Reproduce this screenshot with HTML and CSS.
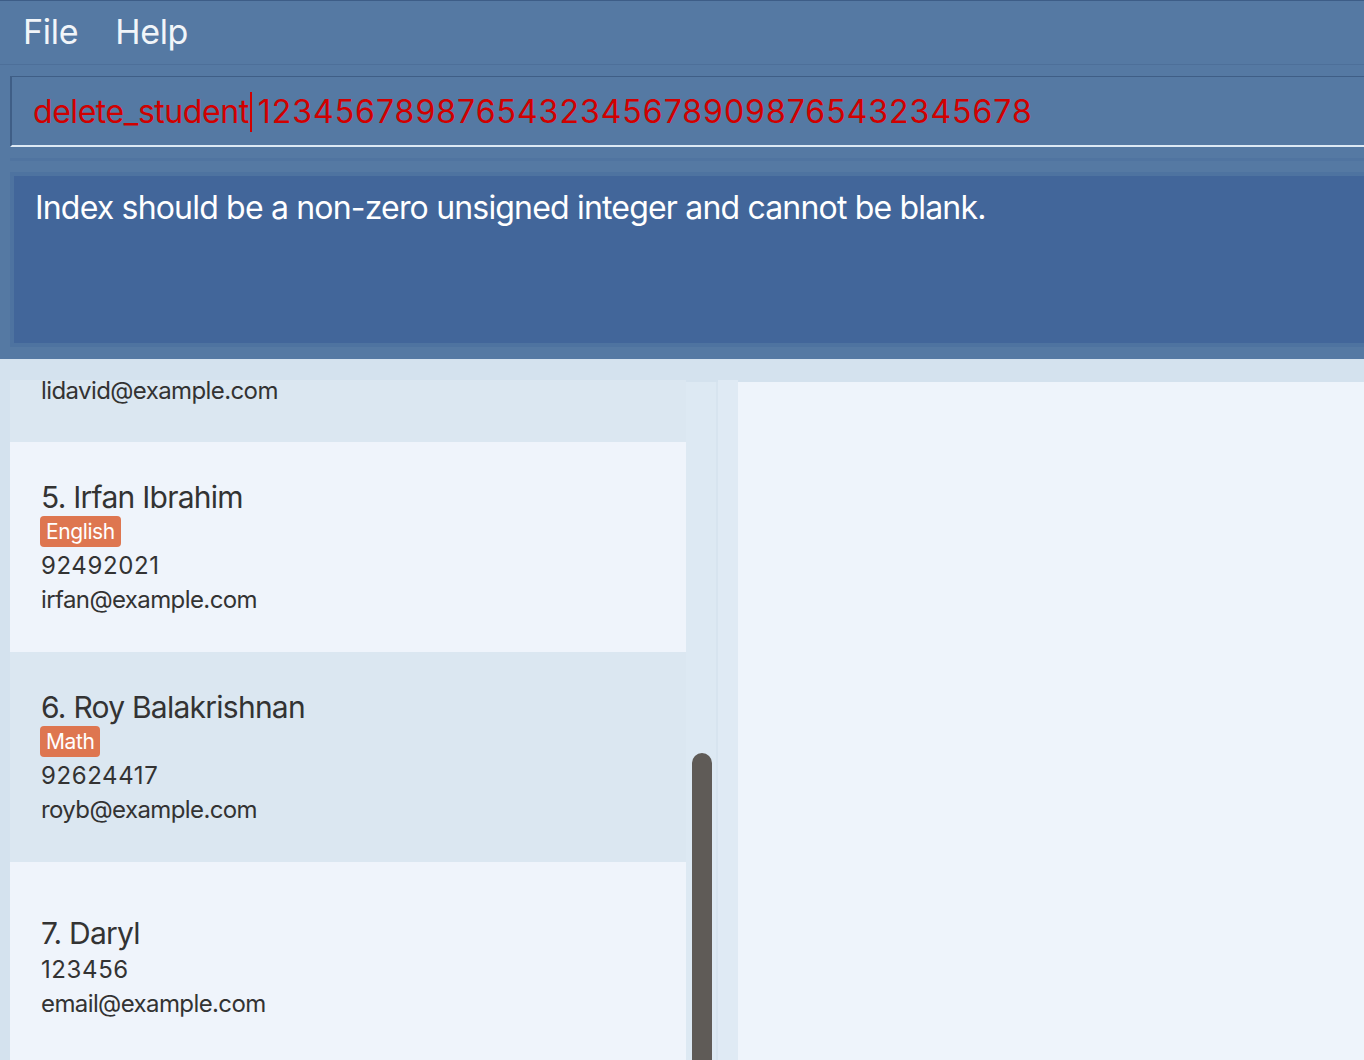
FILE: index.html
```html
<!DOCTYPE html>
<html>
<head>
<meta charset="utf-8">
<link rel="stylesheet" href="styles.css">
</head>
<body>
<div class="app">
  <div class="menubar">
    <span class="menu-item">File</span>
    <span class="menu-item">Help</span>
  </div>
  <div class="top-area">
    <div class="cmdbox"><span class="cmd">delete_student</span><span class="caret"></span><span class="cmd digits">12345678987654323456789098765432345678</span></div>
    <div class="band"></div>
    <div class="result"><div class="result-inner">Index should be a non-zero unsigned integer and cannot be blank.</div></div>
  </div>
  <div class="main">
    <div class="list">
      <div class="card alt clipped">
        <div class="line email">lidavid@example.com</div>
      </div>
      <div class="card">
        <div class="name">5. Irfan Ibrahim</div>
        <div class="tags"><span class="tag">English</span></div>
        <div class="line phone">92492021</div>
        <div class="line email">irfan@example.com</div>
      </div>
      <div class="card alt">
        <div class="name">6. Roy Balakrishnan</div>
        <div class="tags"><span class="tag">Math</span></div>
        <div class="line phone">92624417</div>
        <div class="line email">royb@example.com</div>
      </div>
      <div class="card">
        <div class="name">7. Daryl</div>
        <div class="line phone">123456</div>
        <div class="line email">email@example.com</div>
      </div>
    </div>
    <div class="track"><div class="thumb"></div></div>
    <div class="divider"></div>
    <div class="strip"></div>
    <div class="detail"></div>
  </div>
</div>
</body>
</html>
```
FILE: styles.css
```css
html, body {
  margin: 0;
  padding: 0;
}
body {
  width: 1364px;
  height: 1060px;
  overflow: hidden;
  background: #d4e2ee;
  font-family: Inter, "Noto Sans", sans-serif;
}
.app {
  display: flex;
  flex-direction: column;
  height: 1060px;
}
.menubar {
  height: 63px;
  border-top: 1px solid #3d5d87;
  border-bottom: 1px solid #4d6f99;
  background: #5579a3;
  display: flex;
  align-items: center;
  padding-left: 23px;
  gap: 37px;
  box-sizing: content-box;
}
.menu-item {
  color: #f1f5f9;
  font-size: 34px;
  line-height: 40px;
  margin-top: -2px;
  letter-spacing: -0.3px;
}
.top-area {
  background: #5579a3;
  padding: 11px 0 12px 10px;
  display: flex;
  flex-direction: column;
}
.cmdbox {
  height: 68px;
  border-top: 1px solid #3f5e86;
  border-left: 2px solid #3f5e86;
  border-bottom: 2px solid #dde9f4;
  display: flex;
  align-items: center;
  padding-left: 21px;
  color: #d10000;
  font-size: 32px;
}
.cmd {
  line-height: 40px;
  white-space: nowrap;
  letter-spacing: -0.45px;
  margin-top: 2px;
}
.cmd.digits {
  letter-spacing: 1px;
}
.caret {
  width: 2px;
  height: 40px;
  background: #d10000;
  margin: 2px 6px 0 1px;
}
.band {
  height: 3px;
  margin-top: 11px;
  margin-bottom: 11px;
  background: #5074a0;
}
.result {
  border: 4px solid #4e73a0;
  border-right: none;
  height: 175px;
  box-sizing: border-box;
  width: calc(100% + 4px);
}
.result-inner {
  background: #42669a;
  height: 100%;
  box-sizing: border-box;
  padding: 12px 0 0 21px;
  color: #ffffff;
  font-size: 32px;
  line-height: 40px;
  letter-spacing: -0.82px;
  white-space: nowrap;
}
.main {
  flex: 1;
  display: flex;
  padding-top: 21px;
  min-height: 0;
}
.list {
  margin-left: 10px;
  width: 676px;
  display: flex;
  flex-direction: column;
  overflow: hidden;
}
.card {
  flex: none;
  height: 210px;
  box-sizing: border-box;
  padding-left: 31px;
  background: #eff4fb;
  display: flex;
  flex-direction: column;
  justify-content: center;
  color: #333333;
  overflow: hidden;
}
.card.alt {
  background: #dbe7f1;
}
.card.clipped {
  height: 62px;
  justify-content: flex-start;
  padding-top: 0;
}
.card.clipped .line {
  line-height: 22px;
}
.name {
  font-size: 30px;
  line-height: 38px;
  white-space: nowrap;
  letter-spacing: -0.75px;
}
.tags {
  display: flex;
  height: 31px;
  margin-left: -1px;
  margin-bottom: 1px;
}
.tag {
  background: #de7650;
  color: #ffffff;
  font-size: 21px;
  line-height: 31px;
  padding: 0 6px;
  border-radius: 4px;
  letter-spacing: -0.4px;
}
.line {
  font-size: 24px;
  line-height: 34px;
  white-space: nowrap;
}
.line.phone {
  letter-spacing: 0.6px;
  margin-top: 1px;
}
.line.email {
  letter-spacing: -0.6px;
}
.track {
  width: 30px;
  margin-top: 2px;
  background: #dde9f3;
  position: relative;
}
.thumb {
  position: absolute;
  left: 6px;
  top: 371px;
  width: 20px;
  bottom: 0;
  background: #5f5b57;
  border-radius: 10px 10px 0 0;
}
.divider {
  width: 2px;
  margin-top: 2px;
  background: #d7e4ef;
}
.strip {
  width: 20px;
  background: #dfeaf4;
}
.detail {
  flex: 1;
  margin-top: 2px;
  background: #eef4fb;
}
```
